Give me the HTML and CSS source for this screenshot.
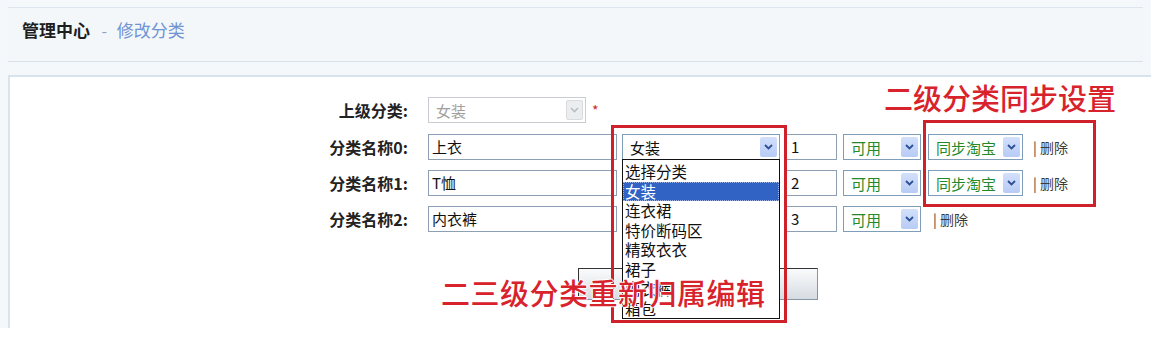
FILE: index.html
```html
<!DOCTYPE html>
<html lang="zh-CN">
<head>
  <meta charset="UTF-8">
  <title>管理中心 - 修改分类</title>
  <link rel="stylesheet" href="styles.css">
</head>
<body>
  <div class="page">
    <div class="header">
      <span class="title">管理中心</span>
      <span class="sep">-</span>
      <span class="sub">修改分类</span>
    </div>

    <div class="main">
      <div class="row row-first">
        <label class="label">上级分类:</label>
        <div class="combo combo-parent disabled">
          <span class="combo-text">女装</span>
          <span class="combo-btn"><svg width="9" height="6" viewBox="0 0 9 6"><path d="M1 1l3.5 3.5L8 1" fill="none" stroke="currentColor" stroke-width="1.6"/></svg></span>
        </div>
        <span class="star">*</span>
      </div>

      <div class="row">
        <label class="label">分类名称0:</label>
        <div class="field field-name">上衣</div>
        <div class="combo combo-parent open">
          <span class="combo-text">女装</span>
          <span class="combo-btn"><svg width="9" height="6" viewBox="0 0 9 6"><path d="M1 1l3.5 3.5L8 1" fill="none" stroke="currentColor" stroke-width="1.8"/></svg></span>
          <ul class="dropdown">
            <li>选择分类</li>
            <li class="active">女装</li>
            <li>连衣裙</li>
            <li>特价断码区</li>
            <li>精致衣衣</li>
            <li>裙子</li>
            <li>内衣裤</li>
            <li>箱包</li>
          </ul>
        </div>
        <div class="field field-num">1</div>
        <div class="combo combo-state">
          <span class="combo-text green">可用</span>
          <span class="combo-btn"><svg width="9" height="6" viewBox="0 0 9 6"><path d="M1 1l3.5 3.5L8 1" fill="none" stroke="currentColor" stroke-width="1.8"/></svg></span>
        </div>
        <div class="combo combo-sync">
          <span class="combo-text green">同步淘宝</span>
          <span class="combo-btn"><svg width="9" height="6" viewBox="0 0 9 6"><path d="M1 1l3.5 3.5L8 1" fill="none" stroke="currentColor" stroke-width="1.8"/></svg></span>
        </div>
        <a class="del">| 删除</a>
      </div>

      <div class="row">
        <label class="label">分类名称1:</label>
        <div class="field field-name">T恤</div>
        <div class="combo combo-parent">
          <span class="combo-text">女装</span>
          <span class="combo-btn"><svg width="9" height="6" viewBox="0 0 9 6"><path d="M1 1l3.5 3.5L8 1" fill="none" stroke="currentColor" stroke-width="1.8"/></svg></span>
        </div>
        <div class="field field-num">2</div>
        <div class="combo combo-state">
          <span class="combo-text green">可用</span>
          <span class="combo-btn"><svg width="9" height="6" viewBox="0 0 9 6"><path d="M1 1l3.5 3.5L8 1" fill="none" stroke="currentColor" stroke-width="1.8"/></svg></span>
        </div>
        <div class="combo combo-sync">
          <span class="combo-text green">同步淘宝</span>
          <span class="combo-btn"><svg width="9" height="6" viewBox="0 0 9 6"><path d="M1 1l3.5 3.5L8 1" fill="none" stroke="currentColor" stroke-width="1.8"/></svg></span>
        </div>
        <a class="del">| 删除</a>
      </div>

      <div class="row">
        <label class="label">分类名称2:</label>
        <div class="field field-name">内衣裤</div>
        <div class="combo combo-parent">
          <span class="combo-text">女装</span>
          <span class="combo-btn"><svg width="9" height="6" viewBox="0 0 9 6"><path d="M1 1l3.5 3.5L8 1" fill="none" stroke="currentColor" stroke-width="1.8"/></svg></span>
        </div>
        <div class="field field-num">3</div>
        <div class="combo combo-state">
          <span class="combo-text green">可用</span>
          <span class="combo-btn"><svg width="9" height="6" viewBox="0 0 9 6"><path d="M1 1l3.5 3.5L8 1" fill="none" stroke="currentColor" stroke-width="1.8"/></svg></span>
        </div>
        <a class="del del-last">| 删除</a>
      </div>

      <div class="actions">
        <button class="submit">提交</button>
      </div>
    </div>

    <!-- annotations drawn over the screenshot -->
    <div class="mark mark-parent"></div>
    <div class="mark mark-sync"></div>
    <div class="note note-sync">二级分类同步设置</div>
    <div class="note note-parent">二三级分类重新归属编辑</div>
  </div>
</body>
</html>
```

FILE: styles.css
```css
* {
  margin: 0;
  padding: 0;
  box-sizing: border-box;
}
body {
  background: #fff;
  font-family: "Noto Sans CJK SC", "Liberation Sans", sans-serif;
  font-size: 16px;
  color: #222;
}
.page {
  position: relative;
  width: 1151px;
  height: 328px;
  padding: 7px 8px 0 8px;
  background: #f5f8fa;
}
.header {
  height: 55px;
  padding: 10px 0 0 14px;
  background: #f3f7fa;
  border-top: 1px solid #dde6ee;
  border-bottom: 1px solid #d8e2ea;
  line-height: 24px;
}
.title {
  font-size: 17px;
  font-weight: bold;
  color: #1e1e1e;
}
.sep {
  margin: 0 6px 0 8px;
  color: #8aa3c8;
}
.sub {
  font-size: 17px;
  color: #6f93d3;
}
.main {
  height: 253px;
  margin: 13px -8px 0 0;
  padding-top: 20px;
  background: #fff;
  border-top: 2px solid #d9e3eb;
  border-left: 2px solid #dbe4ec;
}

/* form rows */
.row {
  display: flex;
  align-items: center;
  height: 26px;
  margin-bottom: 10px;
}
.row-first {
  margin-bottom: 11px;
}
.label {
  width: 398px;
  margin-right: 20px;
  text-align: right;
  font-weight: bold;
  font-size: 16px;
  color: #222;
}
.field {
  height: 26px;
  padding-left: 3px;
  border: 1px solid #8da0b3;
  background: #fff;
  line-height: 24px;
  font-size: 15px;
  color: #111;
}
.field-name {
  width: 189px;
  margin-right: 5px;
}
.field-num {
  width: 51px;
  margin: 0 6px;
  padding-left: 4px;
}
.combo {
  position: relative;
  display: flex;
  align-items: center;
  justify-content: space-between;
  height: 26px;
  padding: 2px 2px 2px 7px;
  border: 1px solid #7f9db9;
  background: #fff;
  font-size: 15px;
}
.combo-parent {
  width: 158px;
}
.combo-state {
  width: 78px;
}
.combo-sync {
  width: 95px;
  margin-left: 7px;
}
.combo-text {
  color: #111;
}
.combo-text.green {
  color: #23892b;
}
.combo-btn {
  display: flex;
  align-items: center;
  justify-content: center;
  width: 17px;
  height: 20px;
  border-radius: 2px;
  background: linear-gradient(#d3e0fb, #b7cbf5);
  color: #2c4f95;
}
.combo.disabled {
  border-color: #c9cdd1;
}
.combo.disabled .combo-text {
  color: #a0a0a0;
}
.combo.disabled .combo-btn {
  background: #ecedef;
  border: 1px solid #d9dbde;
  color: #b9bcc2;
}
.star {
  margin-left: 6px;
  color: #d02a2a;
  font-size: 14px;
}
.del {
  margin-left: 10px;
  font-size: 14px;
  color: #3a3a3a;
}
.del-last {
  margin-left: 12px;
}

/* opened list of the first parent select */
.dropdown {
  position: absolute;
  top: 24px;
  left: -1px;
  width: 158px;
  height: 160px;
  padding-top: 2px;
  border: 1px solid #111;
  background: #fff;
  list-style: none;
  overflow: hidden;
  z-index: 2;
}
.dropdown li {
  height: 19.5px;
  padding-left: 2px;
  line-height: 19.5px;
  font-size: 15.5px;
  color: #111;
}
.dropdown li.active {
  background: #3163c4;
  color: #fff;
  outline: 1px dotted #9db4e4;
  outline-offset: -1px;
}

.actions {
  margin: 36px 0 0 568px;
}
.submit {
  width: 240px;
  height: 32px;
  border: 1px solid #8796a5;
  border-top-color: #333;
  border-left-color: #333;
  background: linear-gradient(#fafbfc, #d6dce2);
  font-family: inherit;
  font-size: 14px;
}

/* red annotations */
.mark {
  position: absolute;
  border: 3px solid #cf2129;
  z-index: 3;
}
.mark-parent {
  left: 611px;
  top: 125px;
  width: 176px;
  height: 198px;
}
.mark-sync {
  left: 923px;
  top: 120px;
  width: 173px;
  height: 87px;
}
.note {
  position: absolute;
  z-index: 4;
  font-size: 29px;
  font-weight: 500;
  line-height: 34px;
  color: #d8232c;
}
.note-sync {
  left: 884px;
  top: 80px;
}
.note-parent {
  left: 441px;
  top: 275px;
  letter-spacing: 0.5px;
  text-shadow: 1px 0 #fff, -1px 0 #fff, 0 1px #fff, 0 -1px #fff;
}
```
